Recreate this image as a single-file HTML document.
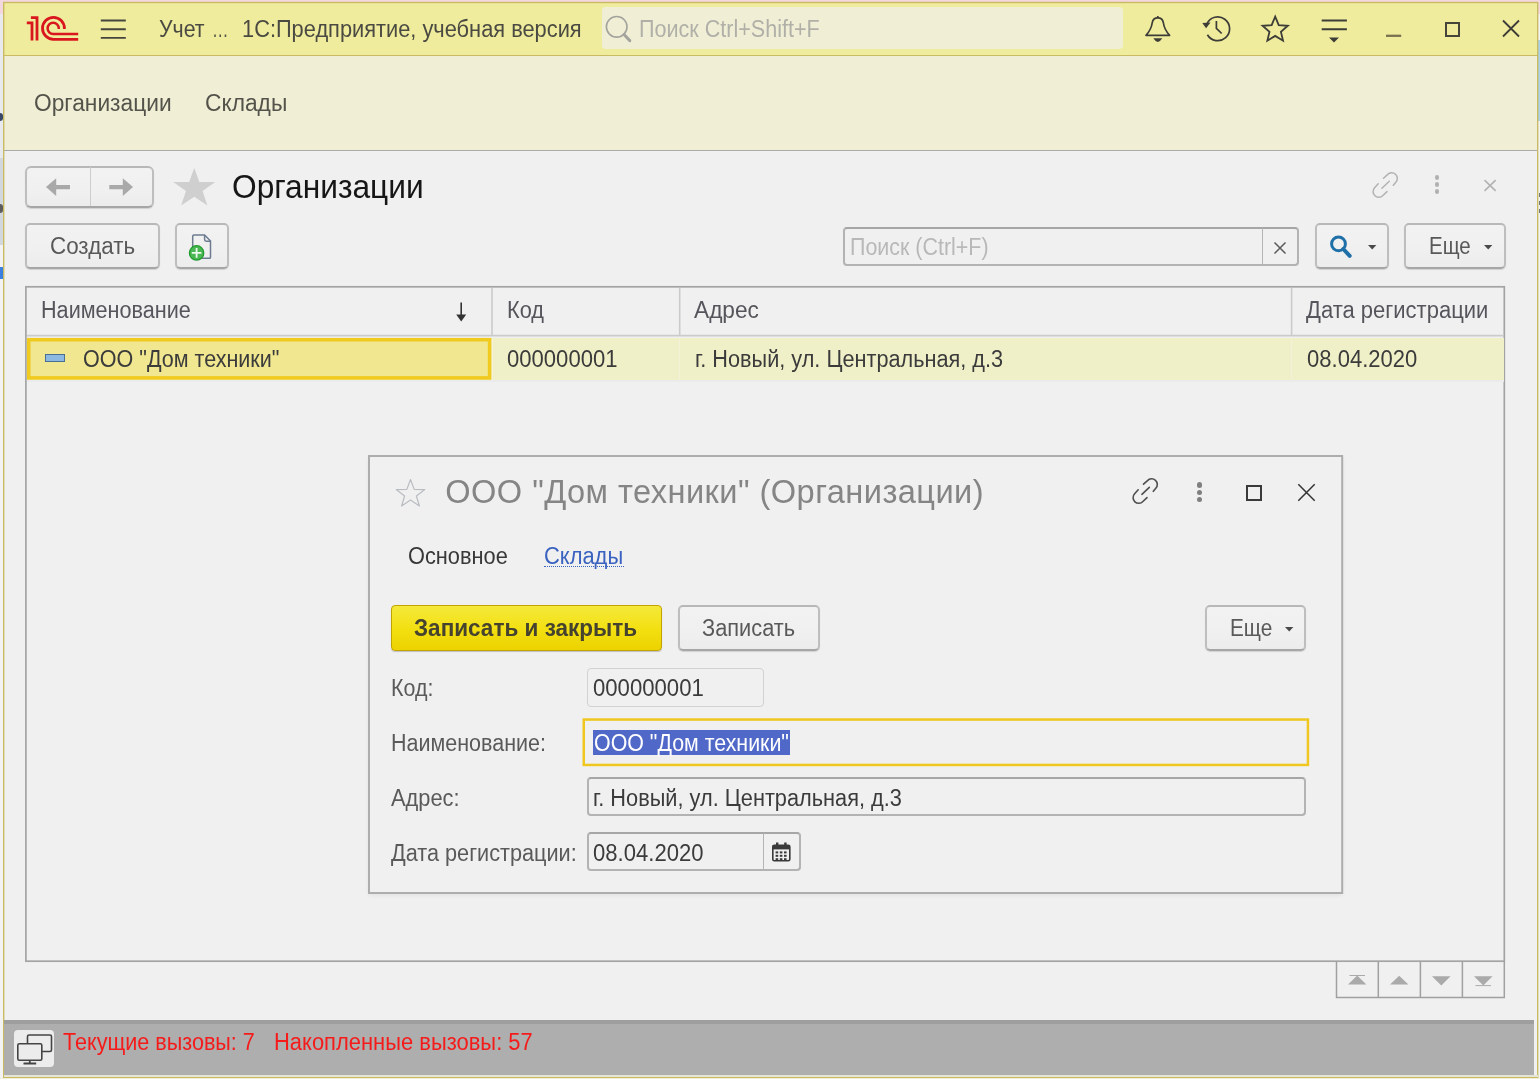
<!DOCTYPE html>
<html lang="ru"><head><meta charset="utf-8"><title>Организации</title>
<style>
html,body{margin:0;padding:0}
body{width:1540px;height:1079px;position:relative;overflow:hidden;background:#f1f0e4;font-family:"Liberation Sans",sans-serif;font-size:23.3px;color:#3c3c3c}
.a{position:absolute}
.t{position:absolute;white-space:pre;line-height:1}
.btn{position:absolute;box-sizing:border-box;border:2px solid #bebebe;border-top-color:#b8b8b8;border-bottom-color:#a6a6a6;border-radius:5px;background:linear-gradient(#f2f2f2,#f0f0f0 60%,#ececec);box-shadow:0 1px 1px rgba(0,0,0,.13)}
.inp{position:absolute;box-sizing:border-box;border:2px solid #b3b3b3;border-top-color:#a6a6a6;border-radius:4px;background:#f0f0f0}
svg{position:absolute;overflow:visible}
#wrap{position:absolute;left:0;top:0;width:1540px;height:1079px;overflow:hidden;filter:blur(0.45px)}
</style></head><body><div id="wrap">
<div class="a" style="left:0px;top:0px;width:1540px;height:1079px;background:#f3f3f3;"></div>
<div class="a" style="left:0px;top:0px;width:1540px;height:14px;background:#f3d7de;"></div>
<div class="a" style="left:0px;top:14px;width:4px;height:144px;background:#e9eaee;"></div>
<div class="a" style="left:0px;top:158px;width:4px;height:87px;background:#d3d8df;"></div>
<div class="a" style="left:1538px;top:40px;width:2px;height:81px;background:#a9d1ea;"></div>
<div class="a" style="left:0px;top:1078px;width:1540px;height:1px;background:#f1eddb;"></div>
<div class="a" style="left:0px;top:267px;width:4px;height:12px;background:#3b7fe0;"></div>
<div class="a" style="left:0px;top:113px;width:3px;height:8px;background:#3a4868;border-radius:0 3px 3px 0"></div>
<div class="a" style="left:0px;top:204px;width:3px;height:9px;background:#5c5c5c;border-radius:0 3px 3px 0"></div>
<div class="a" style="left:1538.5px;top:193px;width:2px;height:4px;background:#777;"></div>
<div class="a" style="left:1538.5px;top:201px;width:2px;height:4px;background:#777;"></div>
<div class="a" style="left:1538.5px;top:209px;width:2px;height:4px;background:#777;"></div>
<div class="a" style="left:3px;top:2px;width:1535px;height:1076px;background:#f0f0f0"></div>
<div class="a" style="left:4px;top:3px;width:1534px;height:52px;background:#f0ec9d;"></div>
<div class="a" style="left:4px;top:55px;width:1534px;height:1px;background:#c9bb62;"></div>
<div class="a" style="left:4px;top:56px;width:1534px;height:94px;background:#f0efd5;"></div>
<div class="a" style="left:4px;top:150px;width:1534px;height:1.3px;background:#aaaaaa;"></div>
<svg style="left:0px;top:0px" width="1540" height="1079" viewBox="0 0 1540 1079" ><rect x="3.7" y="2.5" width="1534" height="1074.8" fill="none" stroke="#c9bb64" stroke-width="1.4"/></svg>
<svg style="left:0;top:0" width="100" height="50" viewBox="0 0 100 50" fill="none" stroke="#d9161e" stroke-width="2.8">
<path d="M30.9 17.6H37V40.6"/>
<path d="M26.8 22.900H32V40.6"/>
<path d="M64.4 28.900V28.350A10.950 10.950 0 1 0 53.450 39.300H78.200"/>
<path d="M58.800 28.900V28.200A5.600 5.600 0 1 0 53.200 33.900H78.200" stroke-width="2.5"/>
</svg>
<svg style="left:0px;top:0px" width="1540" height="60" viewBox="0 0 1540 60" ><path d="M100.8 20.5H125.8M100.8 29.2H125.8M100.8 37.9H125.8" fill="none" stroke="#45453f" stroke-width="1.9"/></svg>
<div class="t" style="left:158.50px;top:16px;font-size:23.3px;line-height:26px;color:#4a4a42;transform:scaleX(0.9147);transform-origin:0.00px 0;">Учет</div>
<div class="t" style="left:211.90px;top:16px;font-size:23.3px;line-height:26px;color:#55554a;transform:scaleX(0.7082);transform-origin:0.00px 0;">…</div>
<div class="t" style="left:242.30px;top:16px;font-size:23.3px;line-height:26px;color:#4a4a42;transform:scaleX(0.9361);transform-origin:0.00px 0;">1С:Предприятие, учебная версия</div>
<div class="a" style="left:602px;top:7px;width:521px;height:42px;background:#f0efd5;border-radius:4px"></div>
<svg style="left:600px;top:10px" width="40" height="36" viewBox="0 0 40 36" fill="none" stroke="#a4a49e" stroke-width="1.6"><circle cx="16.7" cy="16.8" r="10.3"/><path d="M24 24.500L29.800 30.600" stroke-width="3" stroke-linecap="round"/></svg>
<div class="t" style="left:638.80px;top:16px;font-size:23.3px;line-height:26px;color:#b0b0a8;transform:scaleX(0.9254);transform-origin:0.00px 0;">Поиск Ctrl+Shift+F</div>
<svg style="left:0px;top:0px" width="1540" height="60" viewBox="0 0 1540 60" fill="none" stroke="#3d3d38" stroke-width="1.7" stroke-linejoin="round"><path d="M1146 35.300C1150 31 1151.600 27.500 1152.300 22.500C1152.800 19.500 1155 17.800 1157.800 17.800C1160.600 17.800 1162.800 19.500 1163.300 22.500C1164 27.500 1165.600 31 1169.600 35.300Z"/><path d="M1157.800 17.800V16"/><path d="M1153.300 38.300H1162.300Q1157.800 45.500 1153.300 38.300Z" fill="#3d3d38" stroke="none"/></svg>
<svg style="left:0px;top:0px" width="1540" height="60" viewBox="0 0 1540 60" fill="none" stroke="#3d3d38" stroke-width="1.7"><path d="M1206.900 23.800A11.900 11.900 0 1 1 1207.400 34.750"/><path d="M1202.300 22.900L1210.500 22.400L1206.100 28.200Z" fill="#3d3d38" stroke="none"/><path d="M1216.400 21V28.300L1221.700 33.500"/></svg>
<svg style="left:0px;top:0px" width="1540" height="60" viewBox="0 0 1540 60" fill="none" stroke="#3d3d38" stroke-width="1.8" stroke-linejoin="miter"><path d="M1275.20 16.60L1278.73 25.05L1287.85 25.79L1280.91 31.75L1283.02 40.66L1275.20 35.90L1267.38 40.66L1269.49 31.75L1262.55 25.79L1271.67 25.05Z"/></svg>
<svg style="left:0px;top:0px" width="1540" height="60" viewBox="0 0 1540 60" ><path d="M1321.7 20.5H1346.9M1321.7 29.2H1346.9" fill="none" stroke="#3d3d38" stroke-width="1.9"/><path d="M1386 35.8H1401.2" fill="none" stroke="#787250" stroke-width="2.3"/></svg>
<svg style="left:1329px;top:37px" width="10" height="6" viewBox="0 0 10 6" ><path d="M0 0.500H10L5 5.500Z" fill="#3d3d38"/></svg>
<div class="a" style="left:1444.5px;top:21.8px;width:15.5px;height:15px;box-sizing:border-box;border:2px solid #45453c"></div>
<svg style="left:1502px;top:20px" width="18" height="17" viewBox="0 0 18 17" stroke="#3d3d38" stroke-width="1.8" fill="none"><path d="M1 0.500L17 16.500M17 0.500L1 16.500"/></svg>
<div class="t" style="left:34.30px;top:90px;font-size:23.3px;line-height:26px;color:#53534b;transform:scaleX(0.9768);transform-origin:0.00px 0;">Организации</div>
<div class="t" style="left:205.20px;top:90px;font-size:23.3px;line-height:26px;color:#53534b;transform:scaleX(0.9771);transform-origin:0.00px 0;">Склады</div>
<div class="btn" style="left:25px;top:166px;width:129px;height:42px;border-radius:6px"></div>
<div class="a" style="left:90px;top:167px;width:1px;height:39px;background:#cdcdcd;"></div>
<svg style="left:40px;top:170px" width="100" height="34" viewBox="0 0 100 34" ><path d="M6 17.100L16.200 8.300V14.900H30V19.300H16.200V25.900Z" fill="#a9a9a9"/><path d="M93 17.100L82.800 8.300V14.900H69.300V19.300H82.800V25.900Z" fill="#a9a9a9"/></svg>
<svg style="left:171.8px;top:167.3px" width="42" height="40" viewBox="0 0 42 40" ><g transform="scale(1.06,1.01)"><path d="M21 1L25.800 14.800L40.800 14.800L28.800 23.800L33.400 38L21 29.400L8.600 38L13.200 23.800L1.200 14.800L16.200 14.800Z" fill="#cfcfcf"/></g></svg>
<div class="t" style="left:231.50px;top:168px;font-size:32.6px;line-height:37px;color:#161616;transform:scaleX(0.9725);transform-origin:0.00px 0;">Организации</div>
<svg style="left:1372px;top:172px" width="27" height="26" viewBox="0 0 27 26" fill="none" stroke="#b2b2b2" stroke-width="1.5" stroke-linecap="round"><path d="M11.500 6.200L15.500 2.600A5.500 5.500 0 0 1 23.800 10.300L21.300 13.300"/><path d="M6.200 11.800L2.600 15.800A5.500 5.500 0 0 0 10.900 23.500L15 19.600"/><path d="M9.900 16.300L17.300 9.300"/></svg>
<div class="a" style="left:1434.6px;top:175.2px;width:4.8px;height:4.8px;border-radius:50%;background:#b2b2b2"></div>
<div class="a" style="left:1434.6px;top:182.29999999999998px;width:4.8px;height:4.8px;border-radius:50%;background:#b2b2b2"></div>
<div class="a" style="left:1434.6px;top:189.29999999999998px;width:4.8px;height:4.8px;border-radius:50%;background:#b2b2b2"></div>
<svg style="left:1484px;top:179.5px" width="12" height="11" viewBox="0 0 12 11" stroke="#b2b2b2" stroke-width="1.6" fill="none"><path d="M0.500 0.200L11.700 10.800M11.700 0.200L0.500 10.800"/></svg>
<div class="btn" style="left:25px;top:223px;width:135px;height:46px;"></div>
<div class="t" style="left:49.90px;top:233px;font-size:23.3px;line-height:26px;color:#595959;transform:scaleX(0.9611);transform-origin:0.00px 0;">Создать</div>
<div class="btn" style="left:175px;top:223px;width:54px;height:46px;"></div>
<svg style="left:0px;top:0px" width="1540" height="300" viewBox="0 0 1540 300" ><path d="M194 235H204.600L210.500 241V257.200Q210.500 258.300 209.400 258.300H194Q192.700 258.300 192.700 257.200V236.200Q192.700 235 194 235Z" fill="none" stroke="#6d7c90" stroke-width="1.500"/><path d="M204.600 235V239.500Q204.600 241.200 206.300 241.200H210.500" fill="none" stroke="#6d7c90" stroke-width="1.500"/><circle cx="196.600" cy="252.900" r="7.200" fill="#4ab852" stroke="#1f9a2d" stroke-width="1.200"/><path d="M196.600 248.100V257.700M191.800 252.900H201.400" stroke="#eef8ee" stroke-width="1.800"/></svg>
<div class="inp" style="left:843px;top:227px;width:456px;height:39px;"></div>
<div class="a" style="left:1262px;top:228px;width:1px;height:37px;background:#b4b4b4;"></div>
<div class="t" style="left:849.90px;top:234px;font-size:23.3px;line-height:26px;color:#b8b8b8;transform:scaleX(0.9201);transform-origin:0.00px 0;">Поиск (Ctrl+F)</div>
<svg style="left:1274px;top:242px" width="12" height="12" viewBox="0 0 12 12" stroke="#5a5a5a" stroke-width="1.500" fill="none"><path d="M0.500 0.500L11.500 11.500M11.500 0.500L0.500 11.500"/></svg>
<div class="btn" style="left:1315px;top:223px;width:74px;height:46px;"></div>
<svg style="left:1328px;top:234px" width="26" height="26" viewBox="0 0 26 26" ><circle cx="10.500" cy="9.900" r="6.900" fill="none" stroke="#1f6fa8" stroke-width="3"/><path d="M15.300 15L21.700 21.800" stroke="#1f6fa8" stroke-width="4" stroke-linecap="round"/></svg>
<svg style="left:1367.8px;top:245px" width="9" height="5" viewBox="0 0 9 5" ><path d="M0 0H8.400L4.200 4.600Z" fill="#4a4a4a"/></svg>
<div class="btn" style="left:1404px;top:223px;width:102px;height:46px;"></div>
<div class="t" style="left:1429.00px;top:233px;font-size:23.3px;line-height:26px;color:#595959;transform:scaleX(0.8795);transform-origin:0.00px 0;">Еще</div>
<svg style="left:1484.2px;top:245px" width="9" height="5" viewBox="0 0 9 5" ><path d="M0 0H8.400L4.200 4.600Z" fill="#4a4a4a"/></svg>
<svg style="left:0px;top:0px" width="1540" height="1079" viewBox="0 0 1540 1079" ><rect x="25.9" y="286.8" width="1478.4" height="674.4" fill="none" stroke="#a4a4a4" stroke-width="1.7"/></svg>
<svg style="left:0px;top:0px" width="1540" height="1079" viewBox="0 0 1540 1079" ><path d="M27 335.6H1503.5M492 288V335M679.7 288V335M1291.6 288V335" fill="none" stroke="#cbcbcb" stroke-width="1.6"/></svg>
<div class="t" style="left:41.20px;top:297px;font-size:23.3px;line-height:26px;color:#55555c;transform:scaleX(0.9277);transform-origin:0.00px 0;">Наименование</div>
<svg style="left:455px;top:302px" width="13" height="20" viewBox="0 0 13 20" ><path d="M6.200 0.500V15" stroke="#333" stroke-width="1.600" fill="none"/><path d="M1.200 12.500L6.200 19.500L11.200 12.500Z" fill="#333"/></svg>
<div class="t" style="left:507.00px;top:297px;font-size:23.3px;line-height:26px;color:#55555c;transform:scaleX(0.9316);transform-origin:0.00px 0;">Код</div>
<div class="t" style="left:694.00px;top:297px;font-size:23.3px;line-height:26px;color:#55555c;transform:scaleX(0.9737);transform-origin:0.00px 0;">Адрес</div>
<div class="t" style="left:1306.20px;top:297px;font-size:23.3px;line-height:26px;color:#55555c;transform:scaleX(0.9443);transform-origin:0.00px 0;">Дата регистрации</div>
<div class="a" style="left:27px;top:338px;width:1477px;height:42px;background:#f0f0c8;"></div>
<div class="a" style="left:27px;top:380px;width:1477px;height:1.5px;background:#ebebeb;"></div>
<div class="a" style="left:491.2px;top:338px;width:1.6px;height:42px;background:#f3f2d8;"></div>
<div class="a" style="left:678.9px;top:338px;width:1.6px;height:42px;background:#f3f2d8;"></div>
<div class="a" style="left:1290.8px;top:338px;width:1.6px;height:42px;background:#f3f2d8;"></div>
<svg style="left:0px;top:0px" width="1540" height="1079" viewBox="0 0 1540 1079" ><rect x="28.7" y="339.7" width="460.9" height="38.2" fill="#f1e790" stroke="#f0ca1f" stroke-width="3.6"/></svg>
<div class="a" style="left:45px;top:354.400px;width:19.500px;height:8px;box-sizing:border-box;border:1.400px solid #4a6f95;background:#8db9e0"></div>
<div class="t" style="left:83.30px;top:346px;font-size:23.3px;line-height:26px;color:#3b3b3b;transform:scaleX(0.9247);transform-origin:0.00px 0;">ООО "Дом техники"</div>
<div class="t" style="left:507.00px;top:346px;font-size:23.3px;line-height:26px;color:#3b3b3b;transform:scaleX(0.9476);transform-origin:0.00px 0;">000000001</div>
<div class="t" style="left:695.20px;top:346px;font-size:23.3px;line-height:26px;color:#3b3b3b;transform:scaleX(0.9309);transform-origin:0.00px 0;">г. Новый, ул. Центральная, д.3</div>
<div class="t" style="left:1307.00px;top:346px;font-size:23.3px;line-height:26px;color:#3b3b3b;transform:scaleX(0.9458);transform-origin:0.00px 0;">08.04.2020</div>
<svg style="left:0px;top:0px" width="1540" height="1079" viewBox="0 0 1540 1079" ><path d="M1336.5 961.2V997.6H1504.3V961.2M1378.3 961.2V997.6M1420.4 961.2V997.6M1462.4 961.2V997.6" fill="none" stroke="#a0a0a0" stroke-width="1.5"/></svg>
<svg style="left:1340px;top:970px" width="170" height="20" viewBox="0 0 170 20" ><path d="M8 14.500L17.200 5.500L26.400 14.500Z" fill="#aaaaaa"/><path d="M9.500 5.500H25" stroke="#aaaaaa" stroke-width="1"/><path d="M50 14.500L59.200 5.800L68.400 14.500Z" fill="#aaaaaa"/><path d="M92 6.200H110.600L101.300 15.600Z" fill="#aaaaaa"/><path d="M134 6.200H152.600L143.300 15.600Z" fill="#aaaaaa"/><path d="M135.500 15.600H151" stroke="#aaaaaa" stroke-width="1"/></svg>
<div class="a" style="left:369px;top:456px;width:973px;height:437px;background:#f0f0f0;box-shadow:0 2px 5px rgba(0,0,0,.07)"></div>
<svg style="left:0px;top:0px" width="1540" height="1079" viewBox="0 0 1540 1079" ><rect x="369" y="456" width="973.2" height="437" fill="none" stroke="#adadad" stroke-width="2"/></svg>
<svg style="left:394px;top:478px" width="33" height="29" viewBox="0 0 33 29" fill="none" stroke="#b9bdc2" stroke-width="1.200" stroke-linejoin="round"><path d="M16.500 1.500L20.200 11.400L30.800 11.600L22.400 18L25.400 28L16.500 22L7.600 28L10.600 18L2.200 11.600L12.800 11.400Z"/></svg>
<div class="t" style="left:445.30px;top:473px;font-size:32.6px;line-height:37px;color:#858585;letter-spacing:0.447px;">ООО "Дом техники" (Организации)</div>
<svg style="left:1132.4px;top:477.6px" width="27" height="26" viewBox="0 0 27 26" fill="none" stroke="#4e4e4e" stroke-width="1.6" stroke-linecap="round"><path d="M11.500 6.200L15.500 2.600A5.500 5.500 0 0 1 23.800 10.300L21.300 13.300"/><path d="M6.200 11.800L2.600 15.800A5.500 5.500 0 0 0 10.900 23.500L15 19.600"/><path d="M9.900 16.300L17.300 9.300"/></svg>
<div class="a" style="left:1197.2px;top:482.4px;width:5.200px;height:5.200px;border-radius:50%;background:#7f7f7f"></div>
<div class="a" style="left:1197.2px;top:489.5px;width:5.200px;height:5.200px;border-radius:50%;background:#7f7f7f"></div>
<div class="a" style="left:1197.2px;top:496.59999999999997px;width:5.200px;height:5.200px;border-radius:50%;background:#7f7f7f"></div>
<div class="a" style="left:1246px;top:485px;width:15.500px;height:15.500px;box-sizing:border-box;border:2px solid #3a3a3a"></div>
<svg style="left:1298px;top:483.5px" width="17" height="17" viewBox="0 0 17 17" stroke="#333" stroke-width="1.500" fill="none"><path d="M0.300 0.300L16.700 16.700M16.700 0.300L0.300 16.700"/></svg>
<div class="t" style="left:408.00px;top:543px;font-size:23.3px;line-height:26px;color:#383838;transform:scaleX(0.9343);transform-origin:0.00px 0;">Основное</div>
<div class="t" style="left:544.20px;top:543px;font-size:23.3px;line-height:26px;color:#3a62c0;transform:scaleX(0.9403);transform-origin:0.00px 0;">Склады</div>
<div class="a" style="left:544px;top:566.300px;width:80px;height:0;border-top:1.500px dotted #3a62c0"></div>
<div class="a" style="left:391px;top:605px;width:271px;height:46px;box-sizing:border-box;border:1px solid #c2a300;border-radius:4px;background:linear-gradient(#f4e93a,#f3df10 55%,#ecd200);box-shadow:0 1px 1px rgba(0,0,0,.2)"></div>
<div class="t" style="left:414.30px;top:615px;font-size:23.3px;line-height:26px;color:#45432f;transform:scaleX(0.9666);transform-origin:0.00px 0;font-weight:bold;">Записать и закрыть</div>
<div class="btn" style="left:678px;top:605px;width:142px;height:46px;"></div>
<div class="t" style="left:702.00px;top:615px;font-size:23.3px;line-height:26px;color:#595959;transform:scaleX(0.9357);transform-origin:0.00px 0;">Записать</div>
<div class="btn" style="left:1205px;top:605px;width:101px;height:46px;"></div>
<div class="t" style="left:1230.00px;top:615px;font-size:23.3px;line-height:26px;color:#595959;transform:scaleX(0.8921);transform-origin:0.00px 0;">Еще</div>
<svg style="left:1285.2px;top:627px" width="9" height="5" viewBox="0 0 9 5" ><path d="M0 0H8.400L4.200 4.600Z" fill="#4a4a4a"/></svg>
<div class="t" style="left:391.40px;top:675px;font-size:23.3px;line-height:26px;color:#5a5a5a;transform:scaleX(0.9191);transform-origin:0.00px 0;">Код:</div>
<div class="inp" style="left:587px;top:668px;width:177px;height:39px;border:1px solid #d2d2d2"></div>
<div class="t" style="left:592.70px;top:675px;font-size:23.3px;line-height:26px;color:#3b3b3b;transform:scaleX(0.9501);transform-origin:0.00px 0;">000000001</div>
<div class="t" style="left:391.40px;top:730px;font-size:23.3px;line-height:26px;color:#5a5a5a;transform:scaleX(0.9227);transform-origin:0.00px 0;">Наименование:</div>
<svg style="left:0px;top:0px" width="1540" height="1079" viewBox="0 0 1540 1079" ><rect x="583.75" y="719.55" width="724.2" height="45.4" fill="none" stroke="#efc71f" stroke-width="2.5"/></svg>
<div class="a" style="left:592.5px;top:729.8px;width:197.5px;height:25.6px;background:#5068c8;"></div>
<div class="t" style="left:594.00px;top:730px;font-size:23.3px;line-height:26px;color:#ffffff;transform:scaleX(0.9177);transform-origin:0.00px 0;">ООО "Дом техники"</div>
<div class="t" style="left:391.40px;top:785px;font-size:23.3px;line-height:26px;color:#5a5a5a;transform:scaleX(0.9376);transform-origin:0.00px 0;">Адрес:</div>
<div class="inp" style="left:587px;top:777px;width:719px;height:39px;"></div>
<div class="t" style="left:592.70px;top:785px;font-size:23.3px;line-height:26px;color:#3b3b3b;transform:scaleX(0.9333);transform-origin:0.00px 0;">г. Новый, ул. Центральная, д.3</div>
<div class="t" style="left:391.40px;top:840px;font-size:23.3px;line-height:26px;color:#5a5a5a;transform:scaleX(0.9305);transform-origin:0.00px 0;">Дата регистрации:</div>
<div class="inp" style="left:587px;top:832px;width:214px;height:39px;"></div>
<div class="a" style="left:763px;top:833px;width:1px;height:37px;background:#b4b4b4;"></div>
<div class="t" style="left:592.70px;top:840px;font-size:23.3px;line-height:26px;color:#3b3b3b;transform:scaleX(0.9476);transform-origin:0.00px 0;">08.04.2020</div>
<svg style="left:772px;top:842px" width="19" height="20" viewBox="0 0 19 20" ><rect x="0.800" y="3.200" width="17" height="15.600" rx="1.500" fill="none" stroke="#3a3a3a" stroke-width="1.600"/><rect x="0.800" y="3.200" width="17" height="4.200" fill="#3a3a3a"/><rect x="4" y="0.500" width="2.400" height="4.500" fill="#3a3a3a"/><rect x="12.200" y="0.500" width="2.400" height="4.500" fill="#3a3a3a"/><rect x="3.6" y="9.4" width="2.600" height="2" fill="#3a3a3a"/><rect x="3.6" y="12.8" width="2.600" height="2" fill="#3a3a3a"/><rect x="3.6" y="16.2" width="2.600" height="2" fill="#3a3a3a"/><rect x="7.800000000000001" y="9.4" width="2.600" height="2" fill="#3a3a3a"/><rect x="7.800000000000001" y="12.8" width="2.600" height="2" fill="#3a3a3a"/><rect x="7.800000000000001" y="16.2" width="2.600" height="2" fill="#3a3a3a"/><rect x="12.0" y="9.4" width="2.600" height="2" fill="#3a3a3a"/><rect x="12.0" y="12.8" width="2.600" height="2" fill="#3a3a3a"/><rect x="12.0" y="16.2" width="2.600" height="2" fill="#3a3a3a"/></svg>
<div class="a" style="left:4px;top:1019.5px;width:1530px;height:55.5px;background:#aeaeae;"></div>
<div class="a" style="left:4px;top:1019.5px;width:1530px;height:4px;background:#9e9e9e;"></div>
<div class="a" style="left:4px;top:1075px;width:1534px;height:1.5px;background:#e6e4d6;"></div>
<div class="a" style="left:13.6px;top:1030.2px;width:40px;height:37px;background:#ececec;border-radius:4px"></div>
<svg style="left:14px;top:1030px" width="40" height="37" viewBox="0 0 40 37" ><rect x="13.500" y="5" width="24" height="16.500" rx="1.500" fill="#ececec" stroke="#444" stroke-width="1.600"/><rect x="3.800" y="13.800" width="24" height="16.500" rx="1.500" fill="#ececec" stroke="#444" stroke-width="1.600"/><path d="M15.800 30.300V33.300M9.500 33.500H22.200" stroke="#444" stroke-width="1.800" fill="none"/></svg>
<div class="t" style="left:63.30px;top:1029px;font-size:23.3px;line-height:26px;color:#f51b1b;transform:scaleX(0.9264);transform-origin:0.00px 0;">Текущие вызовы: 7</div>
<div class="t" style="left:273.70px;top:1029px;font-size:23.3px;line-height:26px;color:#f51b1b;transform:scaleX(0.9417);transform-origin:0.00px 0;">Накопленные вызовы: 57</div>
</div></body></html>
